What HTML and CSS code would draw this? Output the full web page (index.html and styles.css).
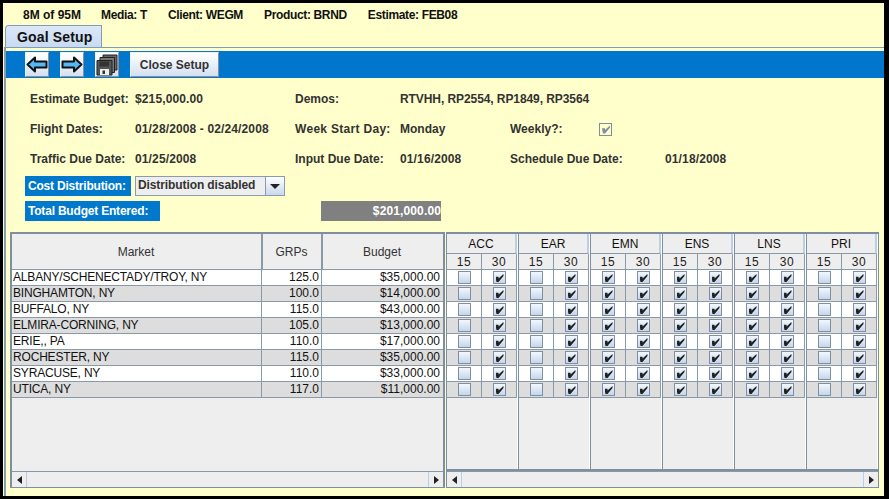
FILE: index.html
```html
<!DOCTYPE html>
<html>
<head>
<meta charset="utf-8">
<title>Goal Setup</title>
<link rel="stylesheet" href="styles.css">
</head>
<body>
<div class="app">
  <div class="topbar"><span class="first">8M of 95M</span><span>Media: T</span><span>Client: WEGM</span><span>Product: BRND</span><span>Estimate: FEB08</span></div>
  <div class="tabs"><div class="tab">Goal Setup</div></div>
  <div class="panel">
    <div class="toolbar">
      <button class="tool"><svg width="22" height="17" viewBox="0 0 22 17"><path d="M1.500 8.500 9 1.500V5.500H20.500V11.500H9V15.500Z" fill="#55b8f4" stroke="#111" stroke-width="2" stroke-linejoin="round"/></svg></button>
      <button class="tool"><svg width="22" height="17" viewBox="0 0 22 17"><path d="M20.500 8.500 13 1.500V5.500H1.500V11.500H13V15.500Z" fill="#55b8f4" stroke="#111" stroke-width="2" stroke-linejoin="round"/></svg></button>
      <button class="tool"><svg width="22" height="22" viewBox="0 0 22 22"><path d="M7 1H21V16H18V4H7Z" fill="#666" stroke="#222"/><path d="M4 3.500H18.500V18.500H15.500V7H4Z" fill="#777" stroke="#222"/><path d="M1 6.500H16V21H1Z" fill="#555" stroke="#222"/><path d="M3.500 7.500H13V12.500H3.500Z" fill="#333"/><path d="M4 15H13V21H4Z" fill="#eee"/><path d="M6.500 16.500H9V20H6.500Z" fill="#333"/></svg></button>
      <button class="close">Close Setup</button>
    </div>
    <div class="info">
      <span>Estimate Budget:</span><span class="num">$215,000.00</span><span>Demos:</span><span class="wide">RTVHH, RP2554, RP1849, RP3564</span>
      <span>Flight Dates:</span><span class="num">01/28/2008 - 02/24/2008</span><span class="wsd">Week Start Day:</span><span>Monday</span><span class="weekly"><span class="weekly-label">Weekly?:</span><i class="cb on flat"></i></span>
      <span>Traffic Due Date:</span><span class="num">01/25/2008</span><span>Input Due Date:</span><span class="num">01/16/2008</span><span>Schedule Due Date:</span><span class="num">01/18/2008</span>
    </div>
    <div class="cost">
      <div class="blue cost-label">Cost Distribution:</div>
      <div class="combo"><span class="combo-text">Distribution disabled</span><span class="combo-btn"><b></b></span></div>
    </div>
    <div class="total">
      <div class="blue total-label">Total Budget Entered:</div>
      <div class="total-value">$201,000.00</div>
    </div>
    <div class="tables">
      <div class="pane left">
        <div class="left-body">
          <div class="lrow head"><span>Market</span><span>GRPs</span><span>Budget</span></div>
          <div class="lrow"><span>ALBANY/SCHENECTADY/TROY, NY</span><span>125.0</span><span>$35,000.00</span></div>
          <div class="lrow alt"><span>BINGHAMTON, NY</span><span>100.0</span><span>$14,000.00</span></div>
          <div class="lrow"><span>BUFFALO, NY</span><span>115.0</span><span>$43,000.00</span></div>
          <div class="lrow alt"><span>ELMIRA-CORNING, NY</span><span>105.0</span><span>$13,000.00</span></div>
          <div class="lrow"><span>ERIE,, PA</span><span>110.0</span><span>$17,000.00</span></div>
          <div class="lrow alt"><span>ROCHESTER, NY</span><span>115.0</span><span>$35,000.00</span></div>
          <div class="lrow"><span>SYRACUSE, NY</span><span>110.0</span><span>$33,000.00</span></div>
          <div class="lrow alt"><span>UTICA, NY</span><span>117.0</span><span>$11,000.00</span></div>
        </div>
        <div class="hscroll"><span class="arrow"><b class="lt"></b></span><span class="track"></span><span class="arrow"><b class="rt"></b></span></div>
      </div>
      <div class="pane right">
        <div class="right-body" id="groups">
          <div class="group"><div class="gname">ACC</div><div class="sub"><span>15</span><span>30</span></div><div class="crow"><span><i class="cb"></i></span><span><i class="cb on"></i></span></div><div class="crow alt"><span><i class="cb"></i></span><span><i class="cb on"></i></span></div><div class="crow"><span><i class="cb"></i></span><span><i class="cb on"></i></span></div><div class="crow alt"><span><i class="cb"></i></span><span><i class="cb on"></i></span></div><div class="crow"><span><i class="cb"></i></span><span><i class="cb on"></i></span></div><div class="crow alt"><span><i class="cb"></i></span><span><i class="cb on"></i></span></div><div class="crow"><span><i class="cb"></i></span><span><i class="cb on"></i></span></div><div class="crow alt"><span><i class="cb"></i></span><span><i class="cb on"></i></span></div></div>
          <div class="group"><div class="gname">EAR</div><div class="sub"><span>15</span><span>30</span></div><div class="crow"><span><i class="cb"></i></span><span><i class="cb on"></i></span></div><div class="crow alt"><span><i class="cb"></i></span><span><i class="cb on"></i></span></div><div class="crow"><span><i class="cb"></i></span><span><i class="cb on"></i></span></div><div class="crow alt"><span><i class="cb"></i></span><span><i class="cb on"></i></span></div><div class="crow"><span><i class="cb"></i></span><span><i class="cb on"></i></span></div><div class="crow alt"><span><i class="cb"></i></span><span><i class="cb on"></i></span></div><div class="crow"><span><i class="cb"></i></span><span><i class="cb on"></i></span></div><div class="crow alt"><span><i class="cb"></i></span><span><i class="cb on"></i></span></div></div>
          <div class="group"><div class="gname">EMN</div><div class="sub"><span>15</span><span>30</span></div><div class="crow"><span><i class="cb on"></i></span><span><i class="cb on"></i></span></div><div class="crow alt"><span><i class="cb on"></i></span><span><i class="cb on"></i></span></div><div class="crow"><span><i class="cb on"></i></span><span><i class="cb on"></i></span></div><div class="crow alt"><span><i class="cb on"></i></span><span><i class="cb on"></i></span></div><div class="crow"><span><i class="cb on"></i></span><span><i class="cb on"></i></span></div><div class="crow alt"><span><i class="cb on"></i></span><span><i class="cb on"></i></span></div><div class="crow"><span><i class="cb on"></i></span><span><i class="cb on"></i></span></div><div class="crow alt"><span><i class="cb on"></i></span><span><i class="cb on"></i></span></div></div>
          <div class="group"><div class="gname">ENS</div><div class="sub"><span>15</span><span>30</span></div><div class="crow"><span><i class="cb on"></i></span><span><i class="cb on"></i></span></div><div class="crow alt"><span><i class="cb on"></i></span><span><i class="cb on"></i></span></div><div class="crow"><span><i class="cb on"></i></span><span><i class="cb on"></i></span></div><div class="crow alt"><span><i class="cb on"></i></span><span><i class="cb on"></i></span></div><div class="crow"><span><i class="cb on"></i></span><span><i class="cb on"></i></span></div><div class="crow alt"><span><i class="cb on"></i></span><span><i class="cb on"></i></span></div><div class="crow"><span><i class="cb on"></i></span><span><i class="cb on"></i></span></div><div class="crow alt"><span><i class="cb on"></i></span><span><i class="cb on"></i></span></div></div>
          <div class="group"><div class="gname">LNS</div><div class="sub"><span>15</span><span>30</span></div><div class="crow"><span><i class="cb on"></i></span><span><i class="cb on"></i></span></div><div class="crow alt"><span><i class="cb on"></i></span><span><i class="cb on"></i></span></div><div class="crow"><span><i class="cb on"></i></span><span><i class="cb on"></i></span></div><div class="crow alt"><span><i class="cb on"></i></span><span><i class="cb on"></i></span></div><div class="crow"><span><i class="cb on"></i></span><span><i class="cb on"></i></span></div><div class="crow alt"><span><i class="cb on"></i></span><span><i class="cb on"></i></span></div><div class="crow"><span><i class="cb on"></i></span><span><i class="cb on"></i></span></div><div class="crow alt"><span><i class="cb on"></i></span><span><i class="cb on"></i></span></div></div>
          <div class="group"><div class="gname">PRI</div><div class="sub"><span>15</span><span>30</span></div><div class="crow"><span><i class="cb"></i></span><span><i class="cb on"></i></span></div><div class="crow alt"><span><i class="cb"></i></span><span><i class="cb on"></i></span></div><div class="crow"><span><i class="cb"></i></span><span><i class="cb on"></i></span></div><div class="crow alt"><span><i class="cb"></i></span><span><i class="cb on"></i></span></div><div class="crow"><span><i class="cb"></i></span><span><i class="cb on"></i></span></div><div class="crow alt"><span><i class="cb"></i></span><span><i class="cb on"></i></span></div><div class="crow"><span><i class="cb"></i></span><span><i class="cb on"></i></span></div><div class="crow alt"><span><i class="cb"></i></span><span><i class="cb on"></i></span></div></div>
        </div>
        <div class="hscroll"><span class="arrow"><b class="lt"></b></span><span class="track"></span><span class="arrow"><b class="rt"></b></span></div>
      </div>
    </div>
  </div>
</div>
</body>
</html>
```
FILE: styles.css
```css
* { box-sizing: border-box; }
html, body { margin: 0; height: 100%; }
body { background: #000; width: 889px; height: 499px; overflow: hidden; padding: 3px 5px 3px 3px; font: 12px "Liberation Sans", Arial, sans-serif; color: #333; }
.app { background: #ffffcc; height: 493px; display: flex; flex-direction: column; }
.topbar { height: 22px; padding: 1px 0 0 20px; display: flex; gap: 21px; align-items: center; font-weight: bold; color: #111; letter-spacing: -.35px; }
.topbar .first { letter-spacing: 0; margin-right: -1px; }
.tabs { height: 22px; padding-left: 2px; display: flex; }
.tab { width: 97px; background: linear-gradient(#dde8f8, #c8daf2); border: 1px solid #7f9db9; border-bottom: 0; border-radius: 4px 0 0 0; font-weight: bold; font-size: 14px; letter-spacing: .15px; color: #111; padding: 3px 0 0 11px; }
.panel { flex: 1; margin-left: 1px; border-top: 1px solid #7f9db9; border-left: 2px solid #8a9bb0; padding-top: 3px; display: flex; flex-direction: column; min-height: 0; }
.toolbar { height: 27px; background: #0077cc; display: flex; gap: 11px; padding: 1px 0 0 19px; }
.tool, .close { height: 25px; padding: 0; border: 1px solid #8a9bb0; border-color: #eef2f8 #8a8f98 #8a8f98 #eef2f8; background: linear-gradient(#fff, #d4e0f0); display: flex; align-items: center; justify-content: center; }
.tool { width: 24px; }
.tool svg { display: block; flex: none; }
.close { width: 89px; font: bold 12px "Liberation Sans", Arial, sans-serif; color: #333; }
.info { display: grid; grid-template-columns: 105px 160px 105px 110px 155px 1fr; grid-template-rows: 30px 30px 29px; padding: 6px 0 0 24px; height: 98px; font-weight: bold; align-items: center; }
.info .wide { grid-column: span 3; letter-spacing: -.08px; }
.num { letter-spacing: .13px; }
.wsd { letter-spacing: .3px; }
.weekly { grid-column: span 2; display: flex; align-items: center; }
.weekly-label { width: 89px; }
.cost, .total { display: flex; margin-left: 19px; height: 20px; font-weight: bold; }
.cost { gap: 4px; }
.total { margin-top: 5px; }
.blue { background: #0078cc; color: #fff; padding-left: 3px; line-height: 20px; letter-spacing: -.2px; }
.cost-label { width: 106px; }
.total-label { width: 135px; }
.total-value { width: 120px; margin-left: 161px; background: #808080; color: #fff; text-align: right; line-height: 20px; letter-spacing: .13px; }
.combo { width: 150px; display: flex; border: 1px solid #8a9bb0; background: #eeeeee; }
.combo-text { flex: 1; padding-left: 2px; line-height: 17px; letter-spacing: -.1px; }
.combo-btn { width: 19px; border-left: 1px solid #8a9bb0; background: linear-gradient(#fff, #c8d8ec); display: flex; align-items: center; justify-content: center; }
.combo-btn b { border-left: 5px solid transparent; border-right: 5px solid transparent; border-top: 5px solid #222; }
.tables { display: flex; margin: 11px 0 0 4px; height: 256px; }
.pane { display: flex; flex-direction: column; border: 2px solid #7f8ea0; border-bottom-width: 1px; background: #eeeeee; }
.left { width: 435px; }
.right { width: 433px; margin-left: 1px; border-left-width: 1px; border-right-width: 1px; }
.left-body, .right-body { flex: 1; min-height: 0; }
.lrow { display: grid; grid-template-columns: 249px 60px 122px; height: 16px; background: #fff; border-bottom: 1px solid #8a99a8; color: #111; line-height: 15px; white-space: nowrap; }
.lrow.alt { background: #dddddd; }
.lrow span { padding: 0 2px 0 1px; text-align: right; border-left: 1px solid #8a99a8; }
.lrow span:first-child { text-align: left; border-left: 0; letter-spacing: -.18px; }
.lrow span:last-child { padding-right: 3px; }
.lrow.head { height: 36px; background: #eeeeee; color: #333; line-height: 36px; }
.lrow.head span { text-align: center; border-left: 2px solid #8a99a8; letter-spacing: 0; }
.lrow.head span:first-child { border-left: 0; }
.right-body { display: flex; }
.group { width: 72px; flex: none; border-right: 1px solid #7f8ea0; border-bottom: 2px solid #7f8ea0; box-shadow: inset -1px 0 0 #fff; padding-right: 1px; }
.gname { height: 20px; text-align: center; line-height: 20px; color: #111; border-bottom: 1px solid #8a99a8; border-right: 2px solid #b8cfe8; }
.sub { display: grid; grid-template-columns: 1fr 1fr; height: 16px; border-bottom: 1px solid #8a99a8; }
.sub span { text-align: center; line-height: 16px; color: #222; letter-spacing: .5px; border-right: 1px solid #8a99a8; }
.crow { display: grid; grid-template-columns: 1fr 1fr; height: 16px; background: #fff; border-bottom: 1px solid #8a99a8; }
.crow.alt { background: #dddddd; }
.crow span { display: flex; align-items: center; justify-content: center; border-right: 1px solid #8a99a8; }
.cb { display: block; position: relative; width: 13px; height: 13px; border: 1px solid #7f8ea0; background: linear-gradient(#f4f8fd, #c3d6ec); }
.cb.on::after { content: ""; position: absolute; left: 2px; top: 2px; width: 8px; height: 8px; background: #222; clip-path: polygon(0 35%, 38% 35%, 38% 55%, 100% 0, 100% 25%, 38% 100%, 12% 100%); }
.cb.flat { background: #ffffcc; }
.cb.flat::after { background: #7f8ea0; }
.hscroll { height: 16px; flex: none; display: flex; border-top: 1px solid #8a99a8; background: #eeeeee; }
.hscroll .arrow { width: 15px; display: flex; align-items: center; justify-content: center; border-right: 1px solid #b8cfe8; }
.hscroll .arrow:last-child { border-right: 0; border-left: 1px solid #b8cfe8; }
.hscroll .track { flex: 1; }
.lt { border-top: 4px solid transparent; border-bottom: 4px solid transparent; border-right: 5px solid #222; }
.rt { border-top: 4px solid transparent; border-bottom: 4px solid transparent; border-left: 5px solid #222; }
```
